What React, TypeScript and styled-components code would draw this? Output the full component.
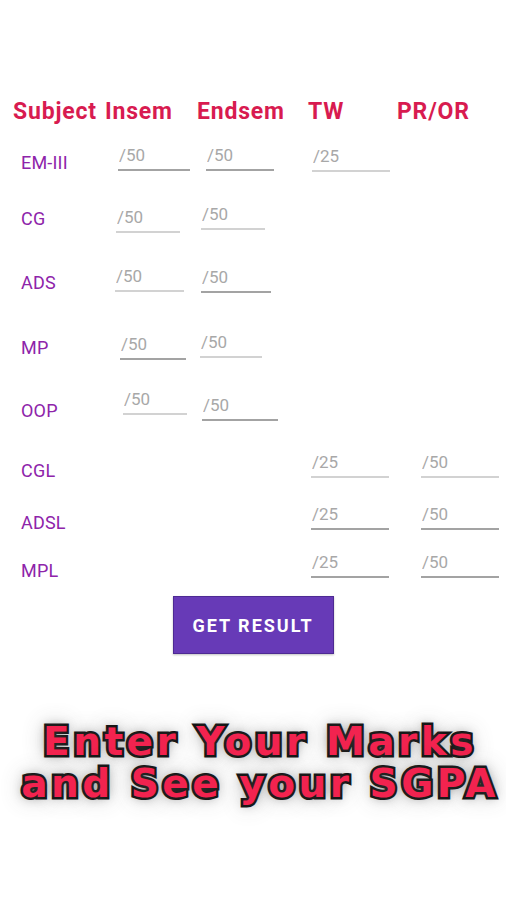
import * as React from 'react';
import styled, { createGlobalStyle } from 'styled-components';

const GlobalStyle = createGlobalStyle`
	html, body {
		margin: 0;
		padding: 0;
		background: #ffffff;
	}
	body {
		font-family: Roboto, "Noto Sans", "Liberation Sans", sans-serif;
	}
`

type Field = {
	col: number;
	x: number;
	w: number;
	dy: number;
	hint: string;
	tone: 'dark' | 'light';
};

type Subject = {
	name: string;
	h: number;
	fields: Field[];
};

const subjects: Subject[] = [
	{
		name: 'EM-III', h: 56, fields: [
			{ col: 2, x: 3, w: 72, dy: 7, hint: '/50', tone: 'dark' },
			{ col: 3, x: 6, w: 68, dy: 7, hint: '/50', tone: 'dark' },
			{ col: 4, x: 1, w: 78, dy: 8, hint: '/25', tone: 'light' },
		]
	},
	{
		name: 'CG', h: 64, fields: [
			{ col: 2, x: 1, w: 64, dy: 13, hint: '/50', tone: 'light' },
			{ col: 3, x: 1, w: 64, dy: 10, hint: '/50', tone: 'light' },
		]
	},
	{
		name: 'ADS', h: 65, fields: [
			{ col: 2, x: 0, w: 69, dy: 8, hint: '/50', tone: 'light' },
			{ col: 3, x: 1, w: 70, dy: 9, hint: '/50', tone: 'dark' },
		]
	},
	{
		name: 'MP', h: 63, fields: [
			{ col: 2, x: 5, w: 66, dy: 11, hint: '/50', tone: 'dark' },
			{ col: 3, x: 0, w: 62, dy: 9, hint: '/50', tone: 'light' },
		]
	},
	{
		name: 'OOP', h: 60, fields: [
			{ col: 2, x: 8, w: 64, dy: 3, hint: '/50', tone: 'light' },
			{ col: 3, x: 2, w: 76, dy: 9, hint: '/50', tone: 'dark' },
		]
	},
	{
		name: 'CGL', h: 52, fields: [
			{ col: 4, x: 0, w: 78, dy: 6, hint: '/25', tone: 'light' },
			{ col: 5, x: 0, w: 78, dy: 6, hint: '/50', tone: 'light' },
		]
	},
	{
		name: 'ADSL', h: 48, fields: [
			{ col: 4, x: 0, w: 78, dy: 6, hint: '/25', tone: 'dark' },
			{ col: 5, x: 0, w: 78, dy: 6, hint: '/50', tone: 'dark' },
		]
	},
	{
		name: 'MPL', h: 37, fields: [
			{ col: 4, x: 0, w: 78, dy: 6, hint: '/25', tone: 'dark' },
			{ col: 5, x: 0, w: 78, dy: 6, hint: '/50', tone: 'dark' },
		]
	},
];

const Screen = styled.main`
	width: 506px;
	min-height: 900px;
	padding-top: 98px;
	box-sizing: border-box;
	background: #ffffff;
`

const HeaderRow = styled.div`
	display: grid;
	grid-template-columns: 92px 92px 111px 89px 1fr;
	padding-left: 13px;
	height: 28px;
	margin-bottom: 25px;
`

const HeaderCell = styled.span`
	font-weight: 700;
	font-size: 23px;
	line-height: 28px;
	letter-spacing: 0.8px;
	color: #d81b50;
	white-space: nowrap;
`

const SubjectRow = styled.div<{ $h: number }>`
	display: grid;
	grid-template-columns: 115px 85px 111px 110px 1fr;
	align-items: start;
	height: ${({ $h }) => $h}px;
`

const SubjectName = styled.span`
	grid-column: 1;
	padding-left: 21px;
	font-size: 18px;
	line-height: 24px;
	letter-spacing: 0.2px;
	color: #8e24aa;
`

const MarkInput = styled.input<{ $col: number; $x: number; $w: number; $dy: number; $tone: 'dark' | 'light' }>`
	grid-column: ${({ $col }) => $col};
	grid-row: 1;
	margin: ${({ $dy }) => $dy - 17}px 0 0 ${({ $x }) => $x}px;
	width: ${({ $w }) => $w}px;
	height: 30px;
	box-sizing: border-box;
	padding: 0 0 0 1px;
	border: none;
	border-bottom: 2px solid ${({ $tone }) => ($tone === 'dark' ? '#a3a3a3' : '#d2d2d2')};
	background: transparent;
	outline: none;
	font-family: Roboto, "Liberation Sans", sans-serif;
	font-size: 17px;
	color: #444;

	&::placeholder {
		color: #a8a8a8;
	}
`

const ButtonWrapper = styled.div`
	display: flex;
	justify-content: center;
`

const ResultButton = styled.button`
	width: 161px;
	height: 58px;
	background: #673ab7;
	border: 1px solid #4d2a93;
	box-shadow: 0 1px 2px rgba(0, 0, 0, 0.25);
	color: #ffffff;
	font-family: Roboto, "Liberation Sans", sans-serif;
	font-weight: 700;
	font-size: 18px;
	letter-spacing: 2px;
	padding: 0;
	cursor: pointer;
`

const Banner = styled.div`
	margin-top: 67px;
	padding-left: 14px;
	display: flex;
	flex-direction: column;
	align-items: center;
`

const BannerLine = styled.span`
	font-family: "DejaVu Sans", "Liberation Sans", sans-serif;
	font-weight: 900;
	font-size: 39px;
	line-height: 42px;
	letter-spacing: 3.5px;
	color: #f2234f;
	-webkit-text-stroke: 5px #111;
	paint-order: stroke fill;
	text-shadow: 0 0 10px rgba(70, 70, 70, 0.5), 0 0 22px rgba(70, 70, 70, 0.45);
	white-space: nowrap;
`

export default function App() {
	return (
		<>
			<GlobalStyle />
			<Screen>
				<HeaderRow>
					<HeaderCell>Subject</HeaderCell>
					<HeaderCell>Insem</HeaderCell>
					<HeaderCell>Endsem</HeaderCell>
					<HeaderCell>TW</HeaderCell>
					<HeaderCell>PR/OR</HeaderCell>
				</HeaderRow>
				{subjects.map((s) => (
					<SubjectRow key={s.name} $h={s.h}>
						<SubjectName>{s.name}</SubjectName>
						{s.fields.map((f) => (
							<MarkInput
								key={f.col}
								placeholder={f.hint}
								$col={f.col}
								$x={f.x}
								$w={f.w}
								$dy={f.dy}
								$tone={f.tone}
							/>
						))}
					</SubjectRow>
				))}
				<ButtonWrapper>
					<ResultButton>GET RESULT</ResultButton>
				</ButtonWrapper>
				<Banner>
					<BannerLine>Enter Your Marks</BannerLine>
					<BannerLine>and See your SGPA</BannerLine>
				</Banner>
			</Screen>
		</>
	)
}
